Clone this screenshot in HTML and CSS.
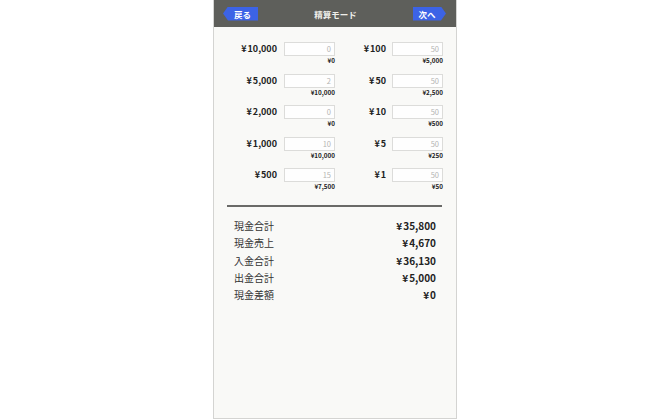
FILE: index.html
```html
<!DOCTYPE html>
<html lang="ja">
<head>
<meta charset="utf-8">
<link rel="stylesheet" href="styles.css">
</head>
<body>
<div class="phone">
  <header class="bar">
    <span class="btn btn-back">戻る</span>
    <span class="title">精算モード</span>
    <span class="btn btn-next">次へ</span>
  </header>
  <main class="content">
    <div class="denoms">
      <div class="cell"><span class="lbl"><span class="yen">¥</span>10,000</span><div class="boxcol"><div class="box">0</div><div class="sub">¥0</div></div></div>
      <div class="cell"><span class="lbl"><span class="yen">¥</span>100</span><div class="boxcol"><div class="box">50</div><div class="sub">¥5,000</div></div></div>
      <div class="cell"><span class="lbl"><span class="yen">¥</span>5,000</span><div class="boxcol"><div class="box">2</div><div class="sub">¥10,000</div></div></div>
      <div class="cell"><span class="lbl"><span class="yen">¥</span>50</span><div class="boxcol"><div class="box">50</div><div class="sub">¥2,500</div></div></div>
      <div class="cell"><span class="lbl"><span class="yen">¥</span>2,000</span><div class="boxcol"><div class="box">0</div><div class="sub">¥0</div></div></div>
      <div class="cell"><span class="lbl"><span class="yen">¥</span>10</span><div class="boxcol"><div class="box">50</div><div class="sub">¥500</div></div></div>
      <div class="cell"><span class="lbl"><span class="yen">¥</span>1,000</span><div class="boxcol"><div class="box">10</div><div class="sub">¥10,000</div></div></div>
      <div class="cell"><span class="lbl"><span class="yen">¥</span>5</span><div class="boxcol"><div class="box">50</div><div class="sub">¥250</div></div></div>
      <div class="cell"><span class="lbl"><span class="yen">¥</span>500</span><div class="boxcol"><div class="box">15</div><div class="sub">¥7,500</div></div></div>
      <div class="cell"><span class="lbl"><span class="yen">¥</span>1</span><div class="boxcol"><div class="box">50</div><div class="sub">¥50</div></div></div>
    </div>
    <hr class="divider">
    <dl class="summary">
      <div class="row"><dt>現金合計</dt><dd><span class="yen">¥</span>35,800</dd></div>
      <div class="row"><dt>現金売上</dt><dd><span class="yen">¥</span>4,670</dd></div>
      <div class="row"><dt>入金合計</dt><dd><span class="yen">¥</span>36,130</dd></div>
      <div class="row"><dt>出金合計</dt><dd><span class="yen">¥</span>5,000</dd></div>
      <div class="row"><dt>現金差額</dt><dd><span class="yen">¥</span>0</dd></div>
    </dl>
  </main>
</div>
</body>
</html>
```

FILE: styles.css
```css
html, body {
  margin: 0;
  padding: 0;
  background: #ffffff;
}
body {
  font-family: "Noto Sans CJK JP", "Noto Sans", sans-serif;
  color: #222;
}
.phone {
  width: 242px;
  height: 418px;
  margin: 0 auto;
  background: #f9f9f7;
  border: 1px solid #d4d4d2;
  border-top: none;
}
.bar {
  height: 27px;
  background: #5e5f5b;
  display: flex;
  align-items: center;
  justify-content: space-between;
  padding: 0 10px 0 9px;
}
.btn {
  height: 14px;
  width: 35px;
  background: #3c63e6;
  color: #fff;
  font-size: 8.5px;
  font-weight: 700;
  line-height: 14px;
  display: flex;
  align-items: center;
  justify-content: center;
}
.btn-back {
  clip-path: polygon(0 50%, 5px 0, 100% 0, 100% 100%, 5px 100%);
  padding-left: 4px;
  box-sizing: border-box;
}
.btn-next {
  width: 33px;
  clip-path: polygon(0 0, calc(100% - 5px) 0, 100% 50%, calc(100% - 5px) 100%, 0 100%);
  padding-right: 5px;
  box-sizing: border-box;
}
.title {
  color: #eeeeea;
  font-size: 8.5px;
  font-weight: 700;
}
.content {
  padding: 15px 14px 0 13px;
}
.denoms {
  display: grid;
  grid-template-columns: 108px 107px;
  column-gap: 1px;
  row-gap: 8.5px;
}
.cell {
  display: flex;
  align-items: flex-start;
}
.lbl {
  width: 50px;
  text-align: right;
  font-size: 9px;
  font-weight: 700;
  line-height: 14px;
  color: #222;
}
.yen {
  margin-right: 1px;
}
.boxcol {
  margin-left: 7px;
  flex: 1;
  display: flex;
  flex-direction: column;
}
.cell:nth-child(even) .boxcol {
  margin-left: 6px;
}
.box {
  height: 12px;
  border: 1px solid #dcdcda;
  background: #fefefe;
  color: #b4b4b2;
  font-size: 7.5px;
  line-height: 12px;
  text-align: right;
  padding-right: 3px;
}
.sub {
  margin-top: 1px;
  font-size: 6.3px;
  font-weight: 700;
  line-height: 8px;
  text-align: right;
  color: #222;
}
.divider {
  margin: 14px 0 0 0;
  border: none;
  height: 2px;
  background: #6a6a68;
}
.summary {
  margin: 10px 6px 0 7px;
}
.row {
  display: flex;
  justify-content: space-between;
  line-height: 17.3px;
  font-size: 10px;
}
.row dt {
  color: #333;
}
.row dd {
  margin: 0;
  font-weight: 700;
  color: #222;
}
```
